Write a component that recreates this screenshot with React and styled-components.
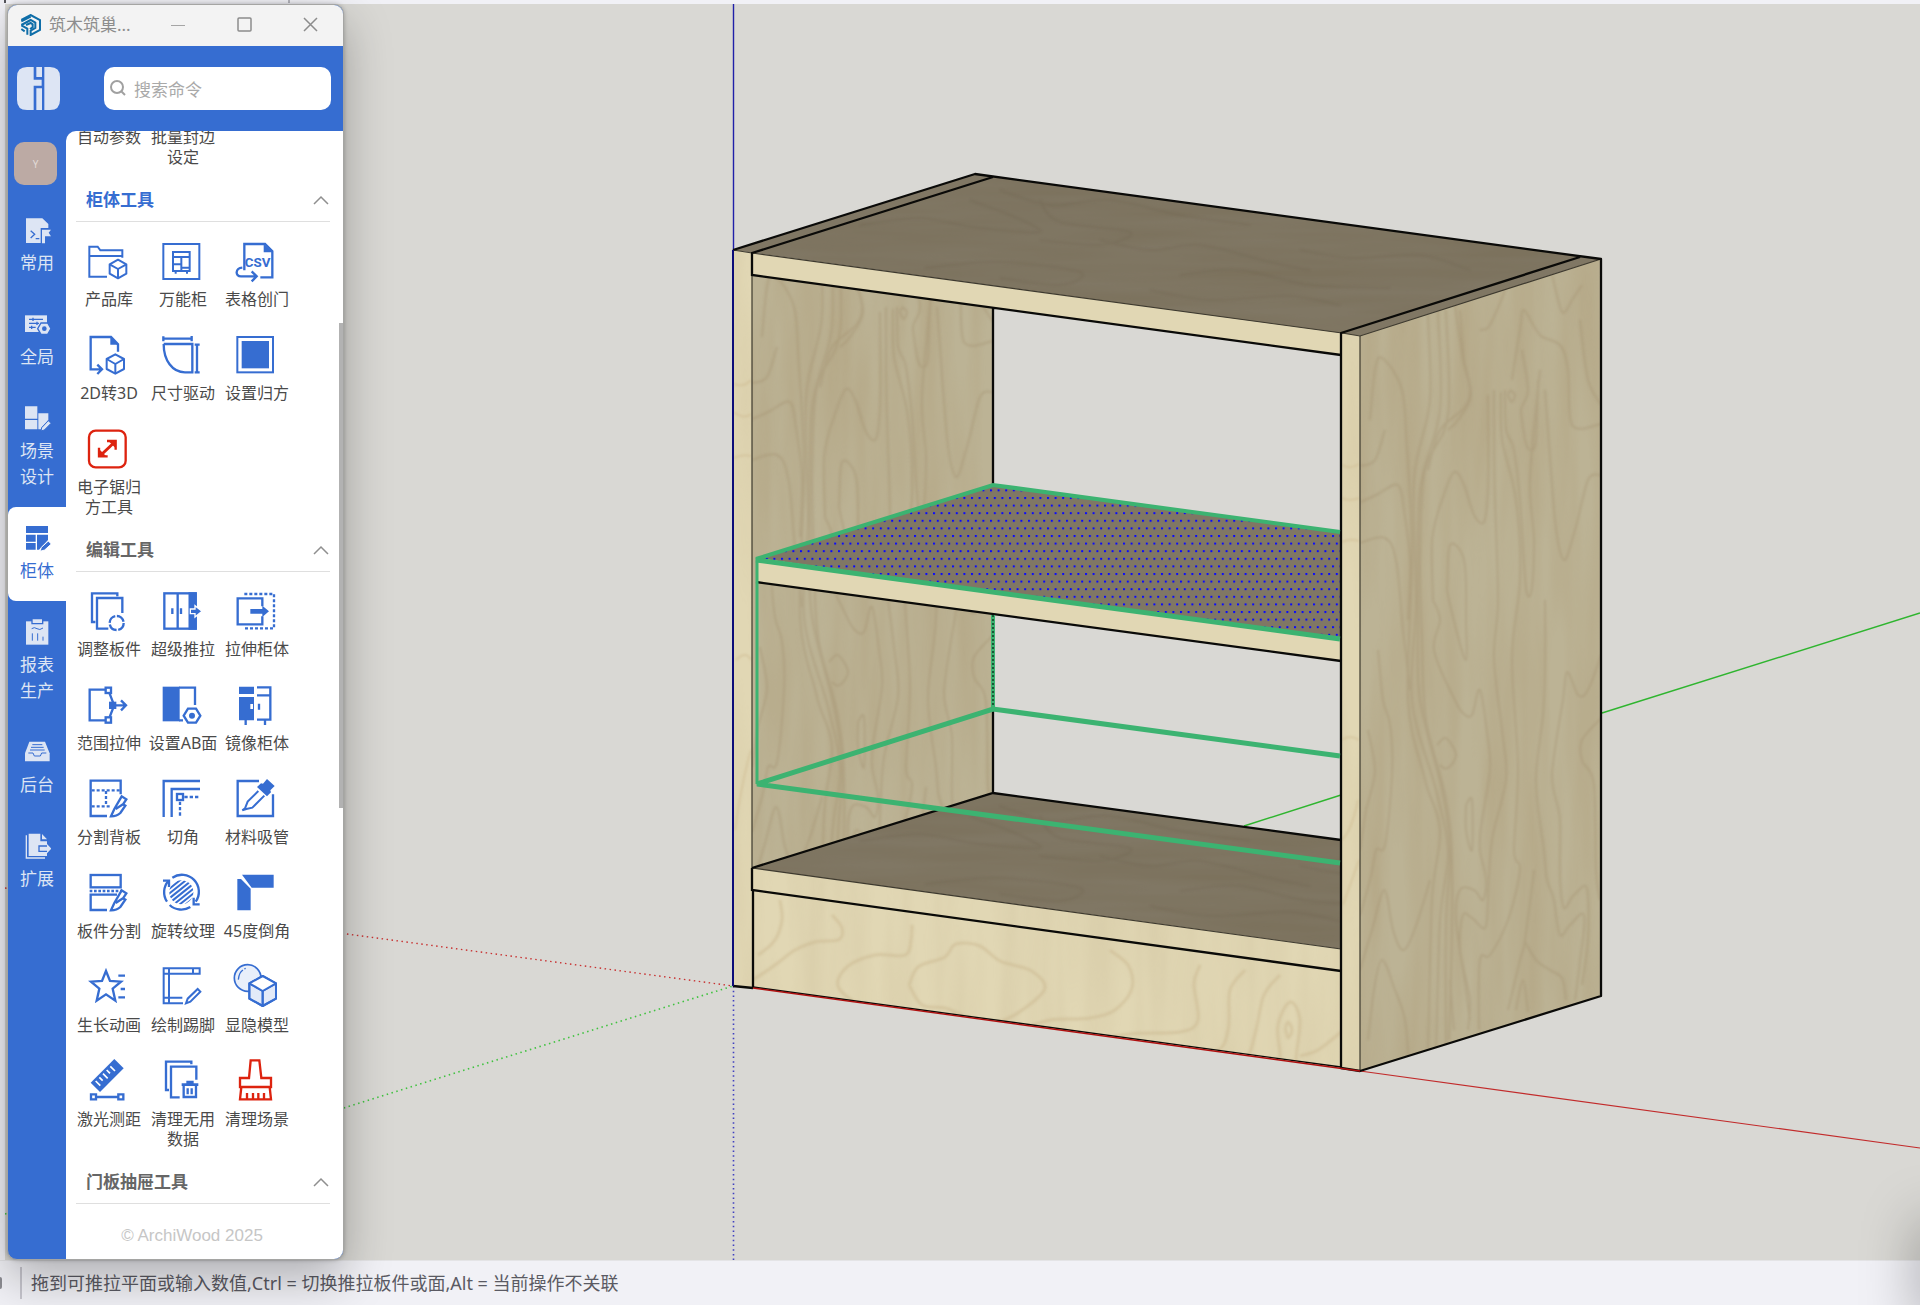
import { useState } from "react";
import styled, { createGlobalStyle, css } from "styled-components";

const BLUE = "#366dd1";
const RED = "#dd230f";
const PALE = "#dde5f4";

const GlobalStyle = createGlobalStyle`
  * {
    box-sizing: border-box;
  }

  body {
    margin: 0;
    font-family: "Noto Sans", "Noto Sans CJK SC", sans-serif;
    color: #4a4a4a;
  }

  button {
    padding: 0;
    border: 0;
    background: none;
    color: inherit;
    font: inherit;
    cursor: pointer;
  }
`;

const Desktop = styled.div`
  position: relative;
  display: grid;
  grid-template-rows: 4px minmax(0, 1fr) 45px;
  height: 100vh;
  overflow: hidden;
  background: #f1f1f6;
`;

const TopStrip = styled.div`
  display: flex;
  justify-content: space-between;
  width: 290px;
  padding-left: 4px;

  &::before,
  &::after {
    content: "";
    width: 2px;
    height: 3px;
    background: #55555c;
  }

  &::after {
    background: #b5b5bc;
  }
`;

const Viewport = styled.main`
  min-height: 0;
  margin-left: 5px;
  background: #d9d8d4;

  svg {
    display: block;
    width: 100%;
    height: 100%;
  }
`;

const StatusBar = styled.footer`
  display: flex;
  align-items: center;
  border-top: 1px solid #e4e4e6;
  font-size: 18px;
  line-height: 24px;
  color: #5a5a63;
`;

const StatusKnob = styled.span`
  width: 2px;
  height: 12px;
  border-radius: 0 6px 6px 0;
  background: #8c8c92;
`;

const StatusText = styled.span`
  margin-left: 18px;
  padding: 4px 0 4px 9px;
  border-left: 2px solid #c6c5cd;
`;

const EdgeShadow = styled.div`
  position: absolute;
  left: 100%;
  top: 92%;
  bottom: 0;
  width: 40px;
  box-shadow: 0 20px 56px rgba(0, 0, 0, 0.34);
`;

const Panel = styled.aside`
  position: absolute;
  top: 4px;
  bottom: 45px;
  left: 7px;
  display: flex;
  flex-direction: column;
  width: 337px;
  border: 1px solid #a5a5a3;
  border-radius: 10px;
  overflow: hidden;
  background: ${BLUE};
  box-shadow: 0 18px 48px rgba(0, 0, 0, 0.28), 0 0 4px rgba(0, 0, 0, 0.25);
`;

const TitleBar = styled.header`
  display: flex;
  align-items: center;
  height: 41px;
  padding: 0 0 2px 12px;
  background: #f3f3f3;
  color: #8d8d8d;
`;

const Title = styled.h1`
  flex: 1;
  margin: 0 0 0 8px;
  font-size: 17px;
  font-weight: 400;
  line-height: 24px;
`;

const WindowButton = styled.button`
  display: flex;
  align-items: center;
  justify-content: center;
  width: 66px;
  height: 38px;
`;

const SearchRow = styled.div`
  display: flex;
  align-items: center;
  justify-content: space-between;
  height: 85px;
  padding: 0 12px 0 9px;
`;

const SearchBox = styled.label`
  display: flex;
  align-items: center;
  gap: 8px;
  width: 227px;
  height: 43px;
  padding: 0 6px;
  border-radius: 10px;
  background: #fff;

  input {
    flex: 1;
    min-width: 0;
    padding: 2px 0 0;
    border: 0;
    outline: 0;
    background: none;
    font-family: inherit;
    font-size: 17px;
    line-height: 24px;
  }

  input::placeholder {
    color: #a9a9a9;
    opacity: 1;
  }
`;

const Body = styled.div`
  display: flex;
  flex: 1;
  min-height: 0;
`;

const Rail = styled.nav`
  display: flex;
  flex-direction: column;
  width: 58px;
  padding-top: 11px;
`;

const Avatar = styled.button`
  width: 43px;
  height: 43px;
  margin: 0 0 14px 6px;
  border-radius: 10px;
  background: #bcaaa4;
  color: #e2dad6;
  font-size: 10px;
`;

const RailItem = styled.button`
  display: flex;
  flex-direction: column;
  align-items: center;
  gap: 6px;
  padding: 17px 9px;
  border-radius: 8px 0 0 8px;
  color: ${PALE};
  font-size: 17px;
  line-height: 26px;

  svg {
    width: 28px;
    height: 28px;
  }

  ${({ $active }) =>
    $active &&
    css`
      background: #fff;
      color: ${BLUE};
    `}
`;

const Content = styled.div`
  position: relative;
  display: flex;
  flex: 1;
  flex-direction: column;
  overflow: hidden;
  border-radius: 10px 0 0 0;
  background: #fff;
`;

const ScrollThumb = styled.div`
  position: absolute;
  top: 17%;
  right: 0;
  width: 4px;
  height: 43%;
  background: #b2b2b2;
`;

const ScrolledRow = styled.div`
  display: grid;
  grid-template-columns: repeat(3, 74px);
  justify-items: center;
  margin-top: -4px;
  padding-left: 6px;
`;

const Section = styled.section`
  padding: 11px 13px 0 10px;
`;

const SectionHeader = styled.button`
  display: flex;
  align-items: center;
  justify-content: space-between;
  width: 100%;
  height: 44px;
  padding: 0 1px 0 10px;
  border-bottom: 1px solid #dfdfdf;
  color: ${({ $current }) => ($current ? BLUE : "#666")};
  font-size: 17px;
  font-weight: 700;
  line-height: 24px;
`;

const ToolGrid = styled.div`
  display: grid;
  grid-template-columns: repeat(3, 74px);
  row-gap: 26px;
  margin-left: -4px;
  padding-top: 19px;
`;

const Tool = styled.button`
  display: flex;
  flex-direction: column;
  align-items: center;
  gap: 8px;

  svg {
    width: 40px;
    height: 40px;
    overflow: visible;
  }
`;

const ToolLabel = styled.span`
  width: ${({ $wide }) => ($wide ? "74px" : "66px")};
  font-size: 16px;
  line-height: 20px;
  text-align: center;
`;

const Copyright = styled.p`
  margin: 20px 0 0;
  padding-right: 25px;
  color: #c6c6c6;
  font-family: "Liberation Sans", Arial, sans-serif;
  font-size: 17px;
  line-height: 24px;
  text-align: center;
`;

/* ---------- icons ---------- */

function Icon({ color = BLUE, children }) {
  return (
    <svg viewBox="2 0 120 120" fill="none" stroke={color} strokeWidth="7" aria-hidden="true">
      {children}
    </svg>
  );
}

function Cube({ x, y, r = 29, fill = "none" }) {
  const w = Math.round(r * 0.88);
  const h = Math.round(r / 2);
  return (
    <g strokeWidth="6" strokeLinejoin="round">
      <path
        d={`M${x} ${y - r}L${x + w} ${y - h}V${y + h}L${x} ${y + r}L${x - w} ${y + h}V${y - h}Z`}
        fill={fill}
      />
      <path d={`M${x - w} ${y - h}L${x} ${y}L${x + w} ${y - h}M${x} ${y}V${y + r}`} />
    </g>
  );
}

const Knife = () => (
  <path d="M68 112L78 90L100 52L114 61L104 76L111 80L96 102Q86 112 68 112ZM82 90L104 76" strokeWidth="7" />
);

const toolIcons = {
  library: (
    <Icon>
      <path d="M56 107H3V17H28L36 28H102V50M3 45H102" strokeWidth="6" />
      <Cube x={89} y={84} r={28} />
    </Icon>
  ),
  cabinet: (
    <Icon>
      <rect x="3" y="9" width="108" height="105" strokeWidth="6" />
      <path d="M32 33H82V90H32ZM32 48H82M57 48V90M32 70H57M57 80H82M40 90V98M74 90V98" strokeWidth="6" />
    </Icon>
  ),
  csv: (
    <Icon>
      <path d="M24 88V9H86L108 31V109H72" />
      <path d="M82 9V34H108Z" fill={BLUE} stroke="none" />
      <rect x="30" y="40" width="70" height="40" fill="#fff" stroke="none" />
      <text
        x="64"
        y="77"
        textAnchor="middle"
        fontFamily="Roboto, sans-serif"
        fontSize="40"
        fontWeight="700"
        fill={BLUE}
        stroke="none"
      >
        CSV
      </text>
      <path d="M18 80C-4 82 -4 106 14 106H60M46 91L61 106L46 121" />
    </Icon>
  ),
  to3d: (
    <Icon>
      <path d="M89 50V28L68 6H7V103H38M27 89L41 103L27 117" />
      <path d="M66 4V29H91Z" fill={BLUE} stroke="none" />
      <Cube x={81} y={87} />
    </Icon>
  ),
  dimension: (
    <Icon>
      <path d="M4 11H88M3 4V19M88 3V19M4 27H90V112H68C30 112 4 76 4 27M104 29V112M97 29H112M97 112H112" />
    </Icon>
  ),
  square: (
    <Icon>
      <rect x="3" y="6" width="107" height="106" strokeWidth="6" />
      <rect x="16" y="18" width="82" height="82" fill={BLUE} stroke="none" />
    </Icon>
  ),
  saw: (
    <Icon color={RED}>
      <rect x="2" y="5" width="110" height="110" rx="20" />
      <path d="M38 78L76 42" strokeWidth="9" />
      <path d="M56 36H82V62M32 56V82H58" />
      <path d="M82 34L82 58L58 34ZM32 84V60L56 84Z" fill={RED} stroke="none" />
    </Icon>
  ),
  adjust: (
    <Icon>
      <path d="M21 93H11V7H87V16M60 113H26V21H102V66" />
      <circle cx="85" cy="96" r="21" strokeDasharray="28 5" />
    </Icon>
  ),
  push: (
    <Icon>
      <rect x="6" y="7" width="94" height="106" />
      <path d="M82 7H100V113H82Z" fill={BLUE} />
      <path d="M46 7V113M30 52V69M56 52V69" />
      <path d="M84 54H98V44L119 61L98 78V68H84Z" fill={BLUE} stroke="#fff" strokeWidth="4" />
    </Icon>
  ),
  stretch: (
    <Icon>
      <path d="M24 9H113V112H24" strokeDasharray="9 6" />
      <path d="M78 46V22H4V100H78V76" />
      <path d="M42 54H78V44L98 61L78 78V68H42Z" fill={BLUE} stroke="none" />
    </Icon>
  ),
  range: (
    <Icon>
      <path d="M50 14H4V106H50M64 26L74 52M64 96L74 70M80 61H112M98 46L113 61L98 76" />
      <rect x="52" y="8" width="16" height="16" />
      <rect x="52" y="97" width="16" height="16" />
      <rect x="62" y="50" width="22" height="22" fill={BLUE} stroke="none" />
    </Icon>
  ),
  abFace: (
    <Icon>
      <path d="M1 5H52V109H1Z" fill={BLUE} stroke="none" />
      <path d="M50 8H98V60M50 106H62M77 71H101L114 92L101 113H77L64 92Z" />
      <circle cx="89" cy="92" r="9" fill={BLUE} stroke="none" />
    </Icon>
  ),
  mirror: (
    <Icon>
      <path d="M8 5H53V27H8ZM8 36H53V106H8Z" fill={BLUE} stroke="none" />
      <path d="M42 57H50V72H42Z" fill="#fff" stroke="none" />
      <path d="M62 7H102V104H62M62 31H102M68 56V74M28 104V120M86 104V120" />
    </Icon>
  ),
  splitBack: (
    <Icon>
      <path d="M56 111H7V5H97V46" />
      <path d="M10 34H97M10 82H66M53 36V80" strokeDasharray="9 6" />
      <Knife />
    </Icon>
  ),
  corner: (
    <Icon>
      <path d="M4 114V6H113M28 114V30H113" />
      <rect x="44" y="45" width="18" height="18" />
      <path d="M66 54H113M53 68V114" strokeDasharray="10 6" />
    </Icon>
  ),
  dropper: (
    <Icon>
      <path d="M68 6H4V111H110V46" />
      <path d="M92 0L115 21L102 34L104 40L92 52L62 24L74 13L80 14Z" fill={BLUE} stroke="none" />
      <path d="M66 36L34 68L26 88L18 94L30 90L48 86L84 50" strokeWidth="6" />
    </Icon>
  ),
  splitBoard: (
    <Icon>
      <rect x="7" y="6" width="90" height="37" />
      <path d="M4 54H100" strokeDasharray="8 5" />
      <path d="M86 65H7V111H56" />
      <Knife />
    </Icon>
  ),
  texture: (
    <Icon>
      <clipPath id="hatch">
        <circle cx="57" cy="58" r="36" />
      </clipPath>
      <path d="M14 86A51 51 0 0 1 18 24M30 14A51 51 0 0 1 100 86M84 102A51 51 0 0 1 22 96" />
      <path d="M2 23H20V42M94 74V94H112" />
      <g clipPath="url(#hatch)" strokeWidth="6">
        {[-60, -44, -28, -12, 4, 20, 36, 52].map((n) => (
          <path key={n} d={`M${7 + n / 2} ${98 + n / 2}L${107 + n / 2} ${18 + n / 2}`} />
        ))}
      </g>
    </Icon>
  ),
  chamfer: (
    <Icon>
      <path d="M17 5H112V44H46ZM3 18H14L43 47V112H3Z" fill={BLUE} stroke="none" />
    </Icon>
  ),
  star: (
    <Icon>
      <path d="M53 12L65 42L98 44L73 65L81 101L53 82L25 101L33 65L8 44L41 42Z" />
      <path d="M90 26H110M97 66H110M90 91H110" />
    </Icon>
  ),
  skirting: (
    <Icon>
      <path d="M62 109H4V4H112V20H4M92 4V20M20 4V109M4 92H60" strokeWidth="6" />
      <path d="M71 109L76 95L106 66L114 74L84 104Z" strokeWidth="6" />
    </Icon>
  ),
  model: (
    <Icon>
      <circle cx="34" cy="33" r="40" fill="#e9effa" strokeWidth="5" />
      <path d="M6 38Q8 16 20 9M24 6L28 4" strokeWidth="4" />
      <Cube x={79} y={72} r={45} fill="#e3eaf8" />
      <path d="M79 29L117 50L79 71L41 50Z" fill="#fff" stroke="none" />
      <Cube x={79} y={72} r={45} />
    </Icon>
  ),
  ruler: (
    <Icon>
      <path d="M78 -6L106 22L35 93L7 65Z" fill={BLUE} stroke="none" />
      <path d="M22 60L36 74M33 49L43 59M44 38L58 52M55 27L65 37M66 16L80 30" stroke="#fff" strokeWidth="5" />
      <path d="M23 108H90M8 100H23V115H8ZM90 100H105V115H90Z" />
    </Icon>
  ),
  clean: (
    <Icon>
      <path d="M20 87H11V2H87V10M52 109H26V17H102V56" />
      <path d="M58 71H108M72 63H94" strokeWidth="8" />
      <path d="M64 74V108H101V74M76 82V100M88 82V100" />
    </Icon>
  ),
  brush: (
    <Icon color={RED}>
      <path d="M43 -2H69L75 51H104V78H11V51H38ZM15 78L11 115H104L100 78M32 115V96M50 115V96M66 115V96M83 115V96" />
    </Icon>
  ),
};

function RailIcon({ children }) {
  return (
    <svg viewBox="0 -2 84 84" fill="currentColor" aria-hidden="true">
      {children}
    </svg>
  );
}

const railIcons = {
  common: (
    <RailIcon>
      <path d="M9 5H58L76 22V34H53V79H9Z" />
      <path d="M23 42L35 53L23 64M38 66H49" fill="none" stroke={BLUE} strokeWidth="4" />
      <path d="M57 39H84L77 48L84 59H66V80H57Z" />
    </RailIcon>
  ),
  global: (
    <RailIcon>
      <path d="M6 14H72V64H6Z" />
      <path d="M18 26H60M18 38H48M18 50H38M30 21V31M42 33V43M26 45V55" stroke={BLUE} strokeWidth="4" />
      <path d="M54 37H74L84 54L74 71H54L44 54Z" stroke={BLUE} strokeWidth="4" />
      <circle cx="64" cy="54" r="7" fill={BLUE} />
    </RailIcon>
  ),
  scene: (
    <RailIcon>
      <path d="M6 5H43V42H6ZM6 46H43V74H6ZM46 26H76V46L56 68V74H46Z" />
      <path d="M76 48L84 56L64 76L54 79L56 69Z" stroke={BLUE} strokeWidth="3" />
    </RailIcon>
  ),
  cabinet: (
    <RailIcon>
      <path d="M9 4H75V25H9ZM9 30H38V51H9ZM9 55H38V75H9ZM42 30H75V46L48 75H42Z" />
      <path d="M76 49L85 58L65 76L51 80L55 68Z" stroke="#fff" strokeWidth="3" />
    </RailIcon>
  ),
  report: (
    <RailIcon>
      <path d="M9 8H76V78H9Z" />
      <path d="M27 0H59V15H27Z" stroke={BLUE} strokeWidth="4" />
      <path d="M26 30Q34 24 42 30T60 28M28 44V66M44 44V66M60 54V66" fill="none" stroke={BLUE} strokeWidth="3" />
    </RailIcon>
  ),
  backend: (
    <RailIcon>
      <path d="M19 9H66L80 44V68H6V44Z" />
      <path d="M28 18H58M24 26H62M21 34H65M16 43H30L34 52H52L56 43H70" fill="none" stroke={BLUE} strokeWidth="3" />
    </RailIcon>
  ),
  extend: (
    <RailIcon>
      <path d="M17 3H52V26H72V38H46V58H72V70H17ZM57 4L72 20H57Z" />
      <path d="M10 8V76H66" fill="none" stroke="currentColor" strokeWidth="4" />
      <path d="M50 42H72V34L85 48L72 62V54H50Z" />
    </RailIcon>
  ),
};

const Chevron = () => (
  <svg width="16" height="10" viewBox="0 0 16 10" fill="none" stroke="#8f8f8f" strokeWidth="1.5" aria-hidden="true">
    <path d="M1 9L8 2L15 9" />
  </svg>
);

const AppLogo = () => (
  <svg width="21" height="22" viewBox="0 0 63 66" fill="none" stroke="#0f6ea8" strokeWidth="6" aria-hidden="true">
    <path d="M4 18L32 3L60 18V48L32 63V50L46 42V26L32 18L4 33" />
    <path d="M4 22L32 8M18 33L32 27L38 31V40L30 45M4 34L22 44V62M4 45L14 52" />
  </svg>
);

const BrandLogo = () => (
  <svg width="43" height="43" viewBox="0 0 129 129" fill={PALE} aria-hidden="true">
    <path d="M30 0H50V38H74V56H50V129H30Q0 129 0 99V30Q0 0 30 0ZM58 0H75V30H58ZM58 64H75V129H58ZM82 0H99Q129 0 129 30V99Q129 129 99 129H82Z" />
  </svg>
);

/* ---------- 3D scene ---------- */

// smooth line through a list of [x, y] points
function curve(points) {
  let d = `M${points[0][0]} ${points[0][1]}`;
  for (let i = 1; i < points.length; i++) {
    const p0 = points[Math.max(i - 2, 0)];
    const p1 = points[i - 1];
    const p2 = points[i];
    const p3 = points[Math.min(i + 1, points.length - 1)];
    const c1 = [p1[0] + (p2[0] - p0[0]) / 6, p1[1] + (p2[1] - p0[1]) / 6];
    const c2 = [p2[0] - (p3[0] - p1[0]) / 6, p2[1] - (p3[1] - p1[1]) / 6];
    d += `C${[...c1, ...c2, ...p2].map(Math.round).join(" ")}`;
  }
  return d;
}

const sideGrain = [
  [[1370, 420], [1375, 370], [1382, 358], [1402, 390], [1407, 450], [1412, 560], [1408, 700], [1425, 780], [1440, 830], [1432, 900], [1428, 1050]],
  [[1428, 315], [1430, 400], [1414, 480], [1416, 600], [1412, 700], [1436, 790], [1448, 850], [1440, 920], [1436, 1050]],
  [[1438, 310], [1440, 410], [1420, 490], [1418, 620], [1420, 700], [1442, 790], [1450, 850], [1446, 920], [1446, 1045]],
  [[1446, 310], [1448, 415], [1425, 470], [1420, 560], [1422, 640], [1426, 720], [1446, 800], [1452, 870], [1449, 1040]],
  [[1455, 305], [1463, 360], [1470, 390], [1464, 408], [1440, 430], [1428, 470]],
  [[1460, 310], [1464, 360], [1471, 396], [1458, 420], [1448, 430]],
  [[1360, 466], [1375, 460], [1385, 430]],
  [[1360, 502], [1378, 494], [1398, 485], [1404, 510], [1410, 560], [1408, 620]],
  [[1360, 543], [1385, 538], [1396, 560], [1402, 620], [1410, 690]],
  [[1433, 600], [1432, 540], [1442, 500], [1454, 472], [1464, 485], [1474, 515], [1484, 522], [1488, 490], [1488, 395]],
  [[1447, 590], [1450, 545], [1464, 560], [1466, 620], [1466, 660], [1455, 625], [1447, 590]],
  [[1433, 600], [1440, 620], [1434, 650], [1450, 690], [1462, 712], [1472, 715], [1480, 690], [1488, 740], [1490, 770], [1482, 820], [1480, 850], [1486, 880], [1483, 900], [1474, 890], [1460, 890], [1456, 920], [1466, 990], [1470, 1020]],
  [[1494, 390], [1495, 500], [1498, 600], [1494, 660], [1502, 730], [1506, 780], [1492, 840], [1488, 900], [1485, 928], [1472, 918], [1463, 915], [1460, 950], [1470, 1000], [1468, 1030]],
  [[1501, 392], [1502, 440], [1516, 500], [1520, 580], [1512, 660], [1518, 770], [1514, 850], [1520, 870], [1508, 920], [1490, 955], [1480, 960], [1479, 1030]],
  [[1505, 390], [1506, 430], [1514, 450], [1520, 500], [1526, 588], [1532, 588], [1534, 540], [1530, 480], [1540, 370]],
  [[1510, 390], [1508, 395], [1512, 402], [1515, 395], [1510, 390]],
  [[1522, 350], [1528, 390], [1521, 410], [1525, 440], [1530, 450], [1536, 440], [1538, 380]],
  [[1480, 330], [1490, 325], [1505, 290]],
  [[1512, 380], [1520, 330], [1524, 310], [1540, 335], [1560, 345], [1568, 370], [1572, 425], [1601, 424]],
  [[1552, 275], [1562, 312], [1572, 300], [1582, 285]],
  [[1580, 320], [1588, 380], [1601, 405]],
  [[1601, 475], [1588, 480], [1575, 530], [1564, 560], [1555, 520], [1545, 390]],
  [[1545, 600], [1544, 700], [1536, 780], [1544, 850], [1547, 880], [1554, 900], [1560, 935], [1570, 925], [1584, 915], [1580, 960], [1575, 1000]],
  [[1563, 700], [1567, 672], [1578, 695], [1588, 690], [1601, 655]],
  [[1563, 700], [1552, 775], [1560, 820], [1560, 880], [1564, 908], [1574, 895], [1587, 888], [1588, 940], [1582, 985]],
  [[1601, 718], [1582, 740], [1582, 760], [1594, 785], [1596, 870], [1600, 900]],
  [[1525, 942], [1536, 960], [1550, 970], [1562, 978], [1566, 1000]],
  [[1508, 1010], [1520, 960], [1525, 940], [1534, 870]],
  [[1360, 915], [1370, 880], [1376, 850], [1385, 845], [1392, 775], [1390, 725], [1383, 700], [1378, 650]],
  [[1368, 730], [1375, 770], [1366, 810], [1360, 850]],
  [[1360, 970], [1372, 930], [1384, 890], [1393, 930], [1404, 950], [1418, 920], [1430, 880]],
  [[1368, 1040], [1374, 990], [1382, 960], [1395, 990], [1405, 1020], [1408, 1060]],
  [[1437, 745], [1446, 738], [1456, 755], [1448, 768], [1440, 765]],
  [[1466, 805], [1472, 800], [1472, 850], [1466, 830], [1466, 805]],
  [[1516, 1010], [1523, 980], [1528, 1012]],
  [[1450, 980], [1454, 1030]],
];

const kickGrain = [
  [[909, 985], [918, 967], [945, 957], [956, 944], [980, 946], [1000, 961], [1030, 970], [1045, 988], [1025, 1008], [998, 1022], [970, 1018], [945, 1008], [922, 1005], [909, 985]],
  [[894, 1024], [860, 1006], [838, 986], [848, 966], [875, 955], [905, 955], [911, 940], [912, 925]],
  [[752, 980], [775, 965], [795, 950], [815, 942], [838, 940], [842, 928], [832, 915]],
  [[758, 955], [775, 940], [782, 920], [780, 900]],
  [[985, 1040], [1025, 1028], [1050, 1020], [1090, 1018], [1115, 1010], [1132, 988], [1128, 965], [1110, 950]],
  [[1030, 1052], [1080, 1042], [1130, 1034], [1180, 1032], [1198, 1020], [1194, 985], [1200, 965]],
  [[1050, 1058], [1110, 1048], [1170, 1052], [1215, 1052], [1228, 1030], [1230, 990], [1245, 970]],
  [[1110, 1060], [1170, 1058], [1215, 1070], [1245, 1060], [1256, 1030], [1264, 995], [1280, 975]],
  [[1270, 1090], [1280, 1060], [1278, 1025], [1290, 1002], [1300, 1020], [1296, 1060], [1300, 1085]],
  [[1285, 1028], [1288, 1022], [1292, 1030], [1288, 1038], [1285, 1028]],
  [[1300, 1056], [1318, 1050], [1341, 1032]],
  [[760, 995], [790, 1005], [820, 1010]],
];

const topGrain = [
  [[860, 225], [920, 218], [980, 228], [1040, 232], [1010, 215], [970, 200]],
  [[925, 268], [1000, 262], [1080, 272], [1060, 285], [1000, 278]],
  [[1000, 190], [1050, 205], [1110, 200], [1180, 215], [1250, 225]],
  [[1100, 240], [1150, 250], [1200, 245], [1270, 262], [1310, 270]],
  [[1040, 200], [1060, 222], [1130, 232], [1100, 245], [1040, 240]],
  [[1150, 290], [1210, 300], [1290, 296], [1340, 305]],
  [[1180, 275], [1240, 270], [1310, 285], [1390, 288]],
  [[1300, 250], [1350, 258], [1420, 255], [1470, 270]],
];

function Grain({ lines, color, width = 2, opacity, transform }) {
  return (
    <g transform={transform} fill="none" stroke={color} strokeWidth={width} opacity={opacity} filter="url(#soft)">
      {lines.map((points, i) => (
        <path key={i} d={curve(points)} />
      ))}
    </g>
  );
}

function Scene() {
  return (
    <svg viewBox="5 4 1915 1256" preserveAspectRatio="xMinYMin slice" role="img" aria-label="柜体模型">
      <defs>
        <filter id="woodV" x="0" y="0" width="100%" height="100%" colorInterpolationFilters="sRGB">
          <feTurbulence type="fractalNoise" baseFrequency=".035 .004" numOctaves="3" seed="4" />
          <feColorMatrix values="0 0 0 0 .66  0 0 0 0 .58  0 0 0 0 .43  1.4 0 0 0 -.42" />
          <feComposite in2="SourceGraphic" operator="in" />
        </filter>
        <filter id="woodH" x="0" y="0" width="100%" height="100%" colorInterpolationFilters="sRGB">
          <feTurbulence type="fractalNoise" baseFrequency=".005 .06" numOctaves="3" seed="9" />
          <feColorMatrix values="0 0 0 0 .45  0 0 0 0 .4  0 0 0 0 .3  1.4 0 0 0 -.42" />
          <feComposite in2="SourceGraphic" operator="in" />
        </filter>
        <filter id="soft">
          <feGaussianBlur stdDeviation="1" />
        </filter>
        <pattern id="dots" width="7.6" height="15.2" patternUnits="userSpaceOnUse" x="2" y="3">
          <rect width="2" height="2" fill="#0808ff" />
          <rect x="3.8" y="7.6" width="2" height="2" fill="#0808ff" />
        </pattern>
        <clipPath id="sideClip">
          <path d="M1360 336L1601 259V996L1360 1071Z" />
        </clipPath>
        <clipPath id="innerClip">
          <path d="M752 275L993 308V793L752 868Z" />
        </clipPath>
        <clipPath id="kickClip">
          <path d="M752 890L1341 971V1068L752 988Z" />
        </clipPath>
        <clipPath id="topClip">
          <path d="M752 253L993 177L1580 257L1342 333Z" />
        </clipPath>
        <clipPath id="bottomClip">
          <path d="M752 868L993 793L1341 840V949Z" />
        </clipPath>
      </defs>

      {/* axes */}
      <g fill="none">
        <path d="M1244 826L1341 795M1602 713L1920 613" stroke="#2fb52f" strokeWidth="1.4" />
        <path d="M1360 1071L1920 1148" stroke="#c22b2b" strokeWidth="1.2" />
        <path d="M5 888L733 986" stroke="#c83232" strokeWidth="1.4" strokeDasharray="1.5 3.5" />
        <path d="M5 1214L733 986" stroke="#3fc23f" strokeWidth="1.6" strokeDasharray="1.5 3.5" />
        <path d="M733.5 986V1260" stroke="#4040c0" strokeWidth="1.6" strokeDasharray="1.5 3.2" />
        <path d="M733.5 4V250" stroke="#2020a8" strokeWidth="1.4" />
      </g>

      {/* inner face of the left side */}
      <path d="M752 275L993 308V793L752 868Z" fill="#bcb395" />
      <path d="M752 275L993 308V793L752 868Z" filter="url(#woodV)" opacity=".4" />
      <g clipPath="url(#innerClip)">
        <Grain lines={sideGrain} color="#a3906f" opacity=".38" transform="translate(-608 -83)" />
      </g>

      {/* outer face of the right side */}
      <path d="M1360 336L1601 259V996L1360 1071Z" fill="#bcb395" />
      <path d="M1360 336L1601 259V996L1360 1071Z" filter="url(#woodV)" opacity=".4" />
      <g clipPath="url(#sideClip)">
        <Grain lines={sideGrain} color="#a3906f" opacity=".38" />
      </g>

      {/* dark upward faces */}
      <g fill="#807764">
        <path d="M733 250L975 174L1601 259L1360 336Z" />
        <path d="M752 868L993 793L1341 840V949Z" />
        <path d="M756 558L993 484L1341 531V639Z" />
      </g>
      <g filter="url(#woodH)" opacity=".4">
        <path d="M752 253L993 177L1580 257L1342 333Z" />
        <path d="M752 868L993 793L1341 840V949Z" />
      </g>
      <g clipPath="url(#topClip)">
        <Grain lines={topGrain} color="#6f6450" opacity=".25" />
      </g>
      <g clipPath="url(#bottomClip)">
        <Grain lines={topGrain} color="#6f6450" opacity=".25" transform="translate(0 616)" />
      </g>
      <path d="M756 558L993 484L1341 531V639Z" fill="url(#dots)" />

      {/* light front edges */}
      <g fill="#e1d7b4">
        <path d="M733 250L752 253V988L733 986Z" />
        <path d="M752 253L1341 333V355L752 275Z" />
        <path d="M756 558L1341 639V661L756 582Z" />
        <path d="M752 868L1341 949V1068L752 988Z" />
        <path d="M1341 333L1360 336V1071L1341 1068Z" />
      </g>
      <g filter="url(#woodV)" opacity=".15">
        <path d="M733 250L752 253V988L733 986Z" />
        <path d="M752 868L1341 949V1068L752 988Z" />
        <path d="M1341 333L1360 336V1071L1341 1068Z" />
      </g>
      <g clipPath="url(#kickClip)">
        <Grain lines={kickGrain} color="#c9b58c" width={3} opacity=".45" />
      </g>
      <g fill="none" stroke="#cdb98f" strokeWidth="2" opacity=".5" filter="url(#soft)">
        <path d="M734 384Q744 388 751 380M734 412Q744 420 751 414M734 458Q742 454 751 456M736 660Q746 650 751 660M735 830Q742 780 751 750" />
        <path d="M1342 465Q1350 470 1359 464M1342 498Q1350 502 1359 498M1342 542Q1350 538 1359 541M1342 740Q1350 734 1359 740M1342 840Q1352 830 1358 800M1343 905Q1352 880 1359 860" />
      </g>

      {/* thin seams */}
      <g fill="none" stroke="#3d392e" strokeWidth="1.2">
        <path d="M733 250L752 253L1342 333L1360 336L1601 259" />
        <path d="M752 275V868M752 868L1341 949M1360 336V1071" />
      </g>

      {/* outlines */}
      <g fill="none" stroke="#0a0a08" strokeWidth="2.3">
        <path d="M733 250L975 174L1601 259V996L1360 1071L1341 1068V333L1580 257" strokeLinejoin="round" />
        <path d="M993 177L752 253V275L1341 355M993 308V484" />
        <path d="M756 582L1341 661M993 709V793M752 868L993 793L1341 840" />
        <path d="M752 868V890L1341 971M753 890V988M733 986L753 988" />
        <path d="M753 987L1341 1067" strokeWidth="1.4" />
      </g>
      <path d="M753 988L1360 1071" stroke="#b01010" strokeWidth="1.4" />
      <path d="M733 250V986" stroke="#0c0c78" strokeWidth="2" />

      {/* push/pull preview */}
      <g fill="none" stroke="#3cb371">
        <path d="M993 615V709" strokeWidth="4" />
        <path d="M993 615V709" stroke="#0f3a22" strokeWidth="1.5" strokeDasharray="2 2" />
        <path d="M756 559L993 485L1340 532" strokeWidth="4" />
        <path d="M756 560L1340 639" strokeWidth="5" />
        <path d="M757 558V784" strokeWidth="3" />
        <path d="M1340 756L993 709L757 784L1340 863" strokeWidth="5" />
      </g>
    </svg>
  );
}

/* ---------- data ---------- */

const railItems = [
  { id: "common", label: "常用" },
  { id: "global", label: "全局" },
  { id: "scene", label: "场景设计" },
  { id: "cabinet", label: "柜体" },
  { id: "report", label: "报表生产" },
  { id: "backend", label: "后台" },
  { id: "extend", label: "扩展" },
];

const sections = [
  {
    title: "柜体工具",
    tools: [
      ["library", "产品库"],
      ["cabinet", "万能柜"],
      ["csv", "表格创门"],
      ["to3d", "2D转3D"],
      ["dimension", "尺寸驱动"],
      ["square", "设置归方"],
      ["saw", "电子锯归方工具"],
    ],
  },
  {
    title: "编辑工具",
    tools: [
      ["adjust", "调整板件"],
      ["push", "超级推拉"],
      ["stretch", "拉伸柜体"],
      ["range", "范围拉伸"],
      ["abFace", "设置AB面", true],
      ["mirror", "镜像柜体"],
      ["splitBack", "分割背板"],
      ["corner", "切角"],
      ["dropper", "材料吸管"],
      ["splitBoard", "板件分割"],
      ["texture", "旋转纹理"],
      ["chamfer", "45度倒角", true],
      ["star", "生长动画"],
      ["skirting", "绘制踢脚"],
      ["model", "显隐模型"],
      ["ruler", "激光测距"],
      ["clean", "清理无用数据"],
      ["brush", "清理场景"],
    ],
  },
  { title: "门板抽屉工具", tools: [] },
];

function App() {
  const [activeTab, setActiveTab] = useState("cabinet");
  const [keyword, setKeyword] = useState("");

  return (
    <>
      <GlobalStyle />
      <Desktop>
        <TopStrip />
        <Viewport>
          <Scene />
        </Viewport>
        <StatusBar>
          <StatusKnob />
          <StatusText>拖到可推拉平面或输入数值,Ctrl = 切换推拉板件或面,Alt = 当前操作不关联</StatusText>
        </StatusBar>
        <EdgeShadow />

        <Panel>
          <TitleBar>
            <AppLogo />
            <Title>筑木筑巢...</Title>
            <WindowButton aria-label="最小化">
              <svg width="14" height="14" stroke="#a5a5a5">
                <path d="M0 7.5H14" />
              </svg>
            </WindowButton>
            <WindowButton aria-label="最大化">
              <svg width="15" height="15" fill="none" stroke="#8c8c8c" strokeWidth="1.5">
                <rect x="1" y="1" width="13" height="13" rx="1" />
              </svg>
            </WindowButton>
            <WindowButton aria-label="关闭">
              <svg width="15" height="15" stroke="#8c8c8c" strokeWidth="1.5">
                <path d="M1 1L14 14M14 1L1 14" />
              </svg>
            </WindowButton>
          </TitleBar>
          <SearchRow>
            <BrandLogo />
            <SearchBox>
              <svg width="16" height="17" fill="none" stroke="#a0a0a0" strokeWidth="2" aria-hidden="true">
                <circle cx="7" cy="7" r="6" />
                <path d="M11 11L15 15" />
              </svg>
              <input
                type="text"
                aria-label="搜索命令"
                placeholder="搜索命令"
                value={keyword}
                onChange={(e) => setKeyword(e.target.value)}
              />
            </SearchBox>
          </SearchRow>
          <Body>
            <Rail>
              <Avatar>Y</Avatar>
              {railItems.map(({ id, label }) => (
                <RailItem key={id} $active={id === activeTab} onClick={() => setActiveTab(id)}>
                  {railIcons[id]}
                  <span>{label}</span>
                </RailItem>
              ))}
            </Rail>
            <Content>
              <ScrolledRow>
                <ToolLabel>自动参数</ToolLabel>
                <ToolLabel>批量封边设定</ToolLabel>
              </ScrolledRow>
              {sections.map(({ title, tools }, index) => (
                <Section key={title}>
                  <SectionHeader $current={index === 0}>
                    {title}
                    <Chevron />
                  </SectionHeader>
                  {tools.length > 0 && (
                    <ToolGrid>
                      {tools.map(([icon, label, wide]) => (
                        <Tool key={label}>
                          {toolIcons[icon]}
                          <ToolLabel $wide={wide}>{label}</ToolLabel>
                        </Tool>
                      ))}
                    </ToolGrid>
                  )}
                </Section>
              ))}
              <Copyright>© ArchiWood 2025</Copyright>
              <ScrollThumb />
            </Content>
          </Body>
        </Panel>
      </Desktop>
    </>
  );
}

export default App;
